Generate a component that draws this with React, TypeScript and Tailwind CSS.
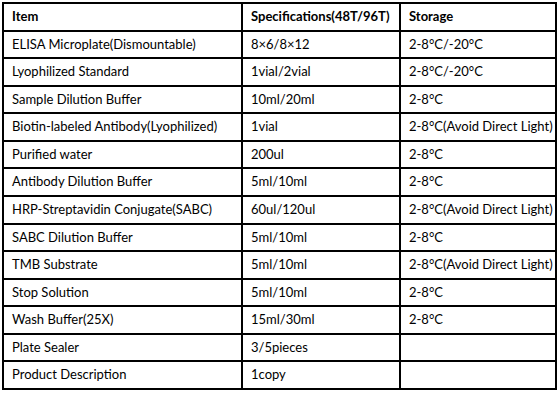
const rows: [string, string, string][] = [
  ["ELISA Microplate(Dismountable)", "8×6/8×12", "2-8°C/-20°C"],
  ["Lyophilized Standard", "1vial/2vial", "2-8°C/-20°C"],
  ["Sample Dilution Buffer", "10ml/20ml", "2-8°C"],
  ["Biotin-labeled Antibody(Lyophilized)", "1vial", "2-8°C(Avoid Direct Light)"],
  ["Purified water", "200ul", "2-8°C"],
  ["Antibody Dilution Buffer", "5ml/10ml", "2-8°C"],
  ["HRP-Streptavidin Conjugate(SABC)", "60ul/120ul", "2-8°C(Avoid Direct Light)"],
  ["SABC Dilution Buffer", "5ml/10ml", "2-8°C"],
  ["TMB Substrate", "5ml/10ml", "2-8°C(Avoid Direct Light)"],
  ["Stop Solution", "5ml/10ml", "2-8°C"],
  ["Wash Buffer(25X)", "15ml/30ml", "2-8°C"],
  ["Plate Sealer", "3/5pieces", ""],
  ["Product Description", "1copy", ""],
];

function App() {
  return (
    <div className="w-[560px] h-[403px] bg-white pt-[2px] pl-[2px]" style={{ fontFamily: "Lato, 'Open Sans', sans-serif" }}>
      <div className="inline-grid grid-cols-[237px_156px_154px] grid-rows-[26px_25px_26px_25px_26px_25px_26px_26px_25px_26px_25px_26px_25px_26px] gap-[2px] p-[2px] bg-black text-[13px] text-black">
        <div className="bg-white pl-2 flex items-center font-bold">Item</div>
        <div className="bg-white pl-2 flex items-center font-bold">Specifications(48T/96T)</div>
        <div className="bg-white pl-2 flex items-center font-bold">Storage</div>
        {rows.map((r) => (
          <>
            <div className="bg-white pl-2 flex items-center">{r[0]}</div>
            <div className="bg-white pl-2 flex items-center">{r[1]}</div>
            <div className="bg-white pl-2 flex items-center">{r[2]}</div>
          </>
        ))}
      </div>
    </div>
  );
}

export default App;
